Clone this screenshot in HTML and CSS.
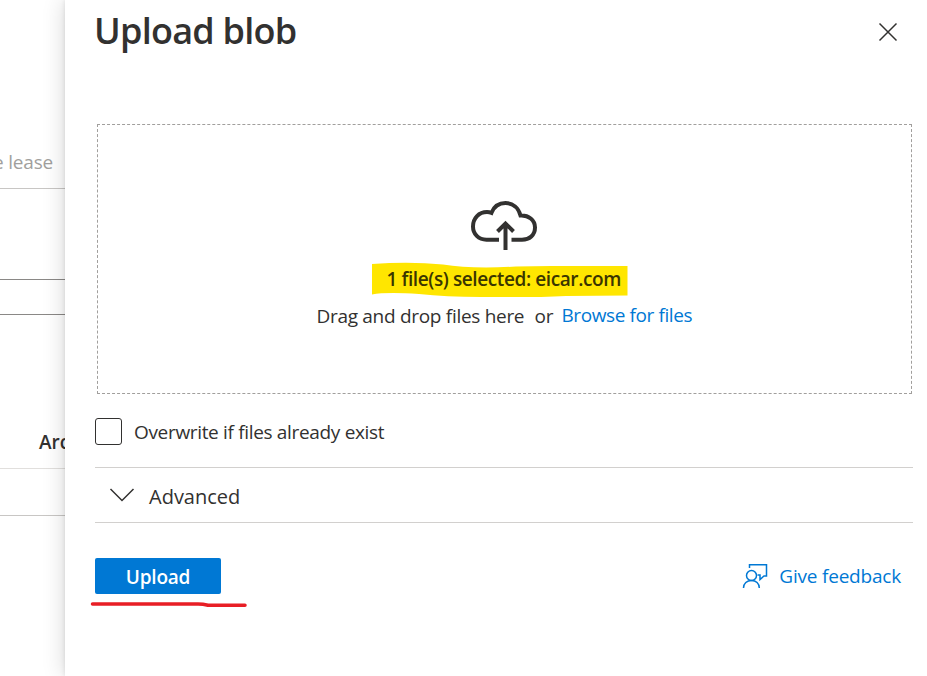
FILE: index.html
```html
<!DOCTYPE html>
<html lang="en">
<head>
<meta charset="utf-8">
<title>Upload blob</title>
<link rel="stylesheet" href="styles.css">
</head>
<body>
<div class="page">
  <aside class="backdrop">
    <div class="toolbar"><span>e lease</span></div>
    <div class="gap"></div>
    <div class="search"></div>
    <div class="table-head"><span>Arc</span></div>
    <div class="table-row"></div>
  </aside>
  <main class="panel">
    <header class="header">
      <h1>Upload blob</h1>
      <button class="close" aria-label="Close"><svg width="20" height="20" viewBox="0 0 20 20"><path d="M1.500 1.500 18.500 18.500M18.500 1.500 1.500 18.500"/></svg></button>
    </header>
    <section class="dropzone">
      <svg class="cloud" width="68" height="50" viewBox="0 0 68 50"><path d="M29 39.700H16.500C8.500 39.700 3 34 3 26.500C3 18 9 12 17 12Q19.500 12 21.500 12.800C24 6.500 29 3 35.500 3C43 3 48.500 8 50.500 15.500C58.500 15 65 20 65 27.500C65 35 59.500 39.700 52 39.700H41.500M35.500 50V24M27.500 31.500 35.500 23.500 43.500 31.500"/></svg>
      <div class="selected">
        <svg class="marker" width="258" height="36" viewBox="0 0 258 36"><path d="M1 3Q40 .5 72 3.500Q100 8 145 5.500L180 5H256.500V34.500L195 35Q160 37 110 36Q75 36 48 33Q15 31 1 33.500Z"/></svg>
        <span>1 file(s) selected: eicar.com</span>
      </div>
      <div class="drop-text"><span class="drag">Drag and drop files here</span><span class="or">or</span><a class="browse">Browse for files</a></div>
    </section>
    <label class="overwrite"><span class="checkbox"></span><span class="overwrite-text">Overwrite if files already exist</span></label>
    <div class="advanced">
      <svg width="26" height="16" viewBox="0 0 26 16"><path d="M1.500 2 13 13.500 24.500 2"/></svg>
      <span>Advanced</span>
    </div>
    <footer class="footer">
      <div class="upload-wrap">
        <button class="upload"><span>Upload</span></button>
        <svg class="underline" width="158" height="8" viewBox="0 0 158 8"><path d="M2.500 3H108Q113 3 118 4.200H155"/></svg>
      </div>
      <a class="feedback">
        <svg width="26" height="26" viewBox="0 0 26 26"><circle cx="9.500" cy="12.500" r="5"/><path d="M1.500 25C1.500 20.500 5 17.500 9.500 17.500S17.300 20.500 17.300 25M7.500 5V1.800H24.500V13H22L18 16.500V12H15.500"/></svg>
        <span>Give feedback</span>
      </a>
    </footer>
  </main>
</div>
</body>
</html>
```
FILE: styles.css
```css
* { box-sizing: border-box; }
body {
  margin: 0;
  background: #fff;
  color: #323130;
  font: 19px/26px "Open Sans", "Noto Sans", sans-serif;
}
svg { fill: none; stroke: #323130; stroke-width: 1.5; display: block; flex: none; }
button { border: 0; padding: 0; font: inherit; background: none; }
.page { display: flex; height: 676px; overflow: hidden; }
.backdrop { width: 65px; flex: none; overflow: hidden; white-space: nowrap; }
.toolbar {
  height: 189px;
  padding: 149px 12px 0 0;
  display: flex;
  justify-content: flex-end;
  color: #a19f9d;
  letter-spacing: -.2px;
  border-bottom: 1px solid #c8c6c4;
}
.gap { height: 90px; }
.search { height: 36px; border: solid #8a8886; border-width: 1px 0; }
.table-head {
  height: 154px;
  padding: 114px 0 0 39px;
  font-weight: 600;
  border-bottom: 1px solid #e1dfdd;
}
.table-row { height: 47px; border-bottom: 1px solid #c8c6c4; }
.panel {
  position: relative;
  flex: none;
  width: 862px;
  padding: 0 14px 0 30px;
  background: #fff;
  box-shadow: 0 0 22px rgba(0, 0, 0, .16), 0 0 5px rgba(0, 0, 0, .1);
}
.header { height: 124px; display: flex; justify-content: space-between; padding: 7px 15px 0 0; }
h1 { margin: 0 0 0 -1px; font-size: 36px; line-height: 48px; font-weight: 600; letter-spacing: -.75px; }
.close { width: 20px; height: 20px; margin-top: 15px; }
.dropzone {
  height: 270px;
  margin: 0 1px 0 2px;
  padding-top: 75px;
  border: 1px dashed #a19f9d;
  display: flex;
  flex-direction: column;
  align-items: center;
}
.cloud { stroke-width: 4; margin-left: -1px; }
.selected {
  position: relative;
  width: 258px;
  height: 36px;
  margin: 11px 0 0 -10px;
  padding: 5px 0 0 16px;
  font-weight: 600;
  white-space: nowrap;
  color: #3a3500;
  letter-spacing: -.4px;
}
.selected span { position: relative; }
.marker { position: absolute; left: 0; top: 0; fill: #ffe600; stroke: none; }
.drop-text { display: flex; width: 376px; margin-top: 6px; white-space: nowrap; }
.drag { width: 218px; letter-spacing: -.3px; }
.or { width: 27px; letter-spacing: -.2px; }
.drag, .or { flex: none; }
.browse { color: #0078d4; margin-top: -1px; letter-spacing: -.4px; }
.overwrite { height: 73px; display: flex; padding-top: 24px; }
.checkbox { width: 27px; height: 27px; border: 1px solid #323130; border-radius: 3px; margin-right: 12px; }
.overwrite-text { padding-top: 1px; letter-spacing: -.33px; }
.advanced {
  height: 56px;
  padding: 4px 0 0 14px;
  display: flex;
  align-items: center;
  gap: 14px;
  border: solid #d2d0ce;
  border-width: 1px 0;
  font-size: 20px;
}
.advanced svg { margin-top: -4px; }
.footer { display: flex; justify-content: space-between; padding: 35px 12px 0 0; }
.upload-wrap { position: relative; width: 126px; height: 36px; }
.upload { width: 126px; height: 36px; background: #0078d4; color: #fff; border-radius: 2px; font-weight: 600; letter-spacing: -.2px; display: flex; justify-content: center; align-items: center; padding-top: 2px; }
.underline { position: absolute; left: -5px; top: 43px; stroke: #e81e25; stroke-width: 3.5; stroke-linecap: round; }
.feedback { display: flex; gap: 11px; color: #0078d4; padding-top: 5px; white-space: nowrap; letter-spacing: -.2px; }
.feedback svg { stroke: #0078d4; }
```
